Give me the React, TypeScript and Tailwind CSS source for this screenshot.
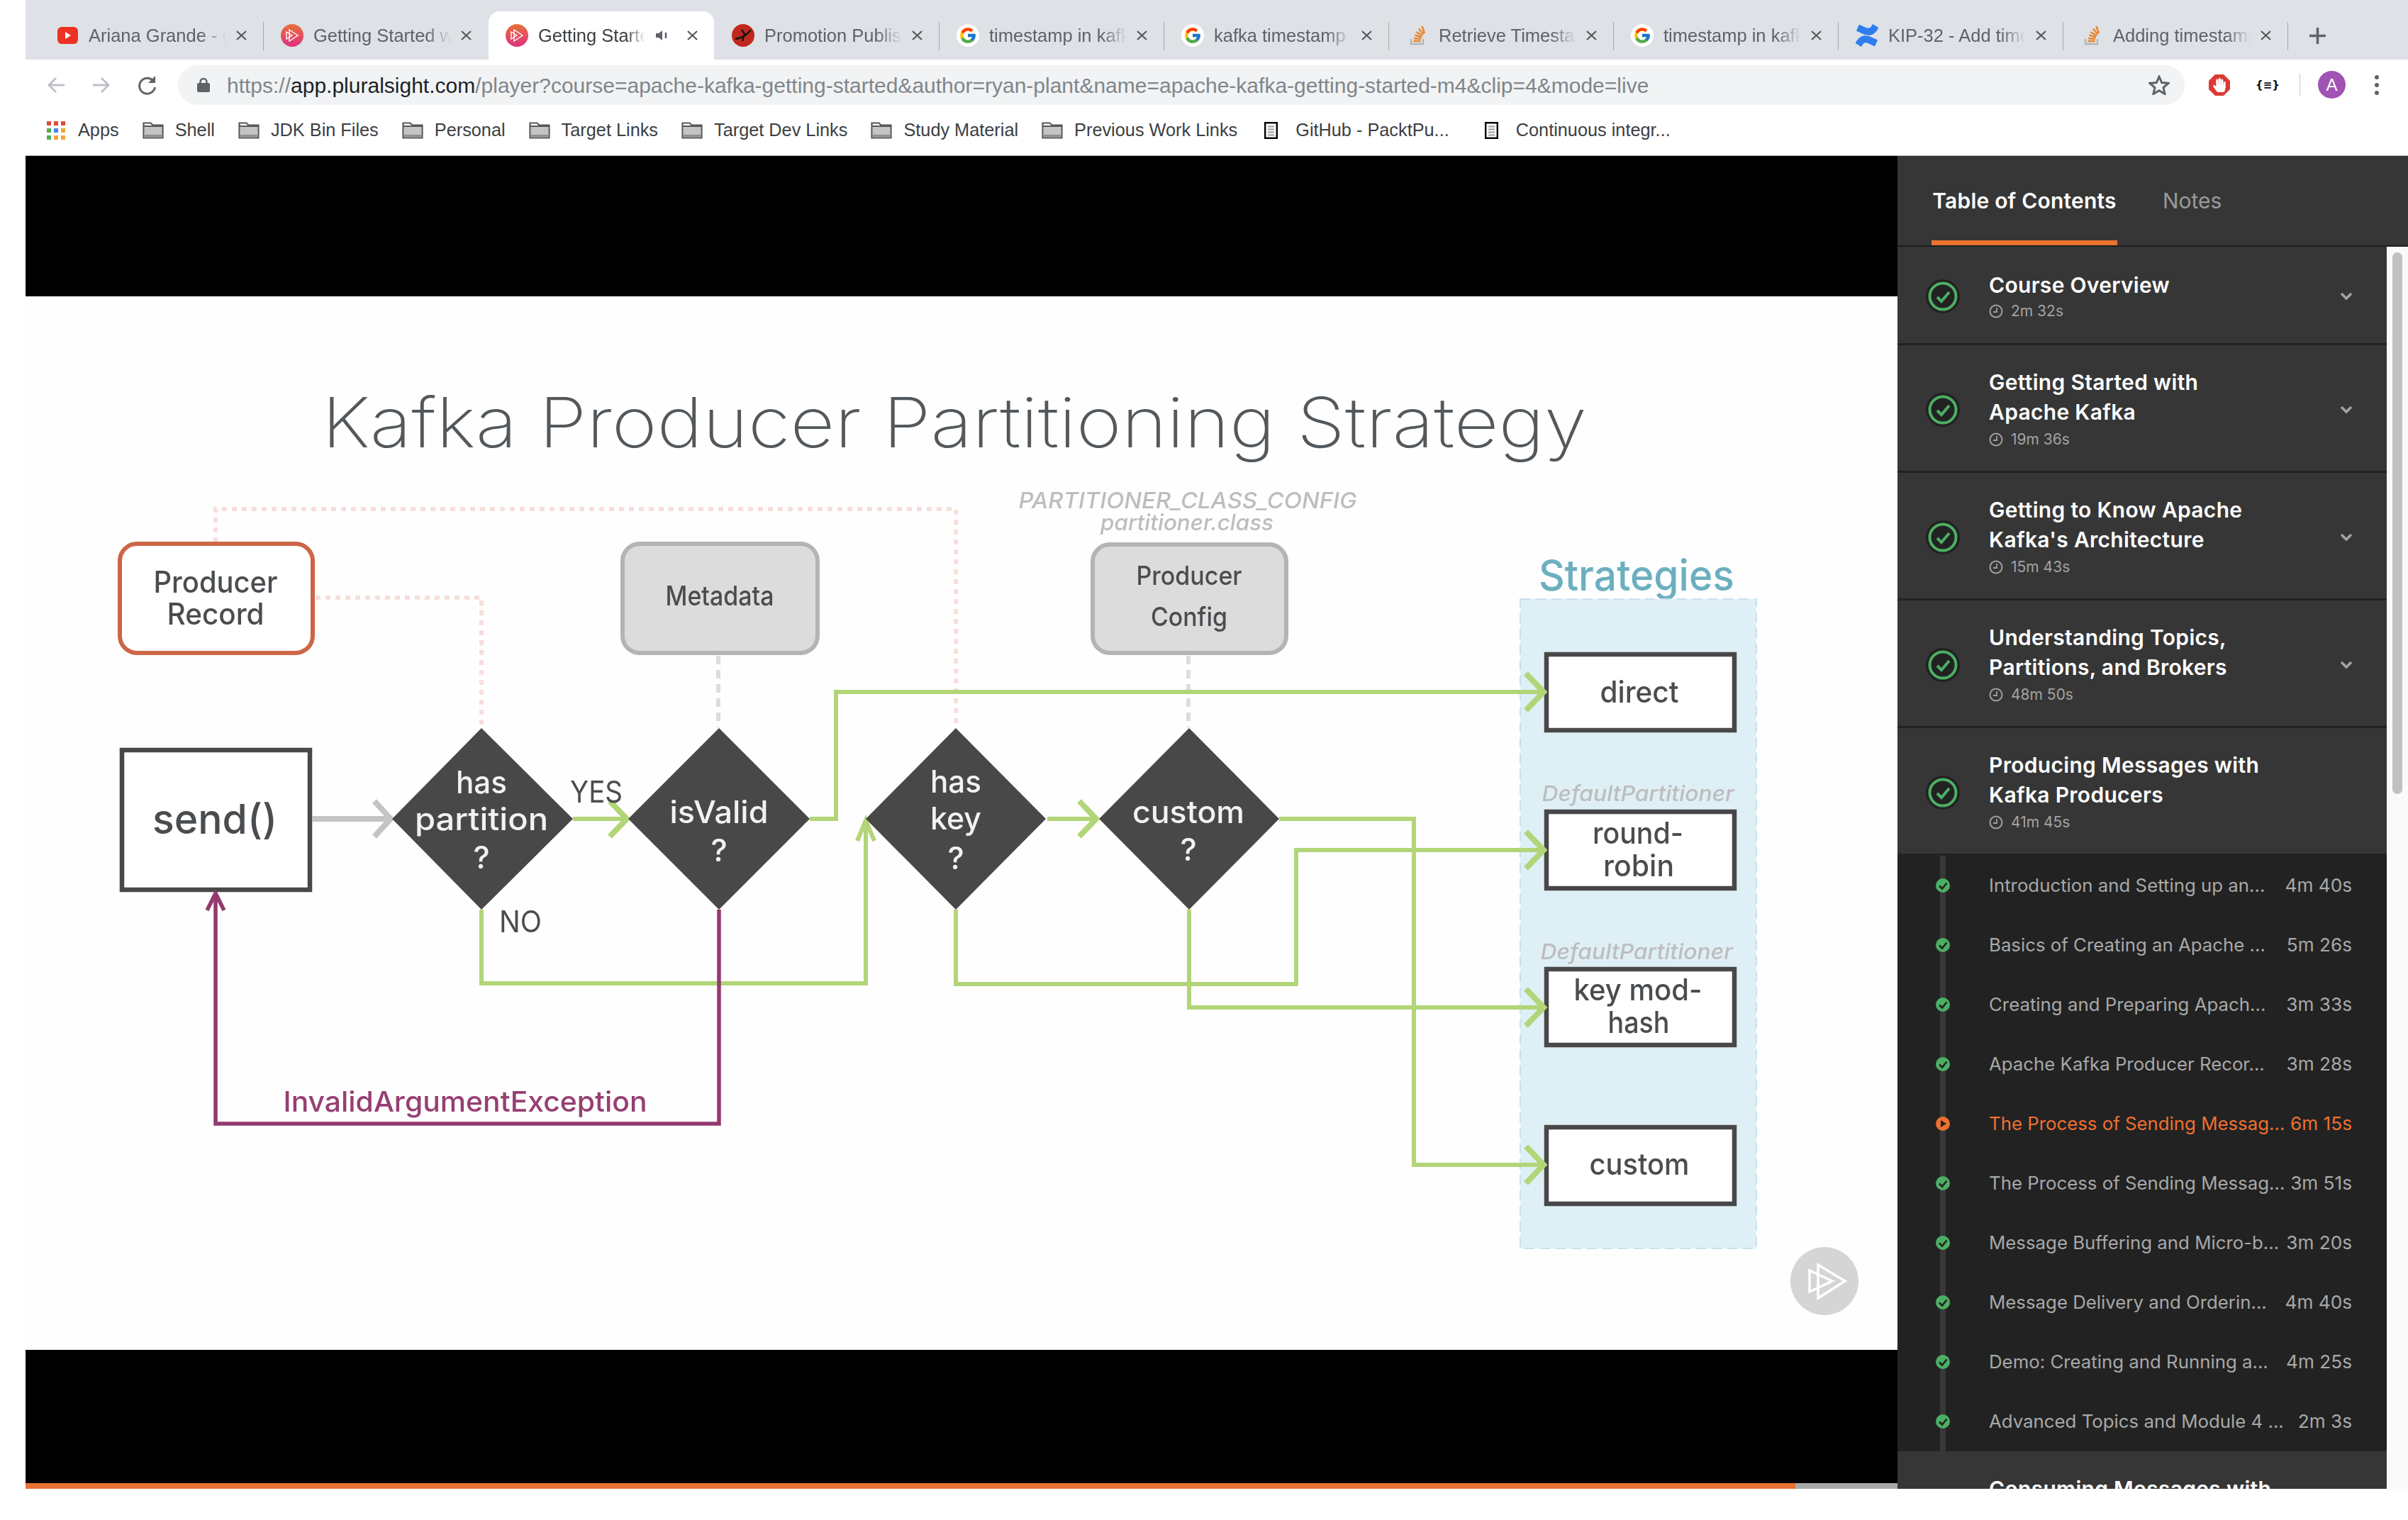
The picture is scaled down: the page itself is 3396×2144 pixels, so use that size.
import React from "react";
import { FcGoogle } from "react-icons/fc";
import { SiConfluence } from "react-icons/si";
import { FaHandPaper } from "react-icons/fa";

const PsIcon = ({ id }: { id: string }) => (
  <svg width="32" height="32" viewBox="0 0 32 32">
    <defs>
      <linearGradient id={id} x1="0" y1="0" x2="0" y2="1">
        <stop offset="0" stopColor="#e8703a" />
        <stop offset="1" stopColor="#e0307f" />
      </linearGradient>
    </defs>
    <circle cx="16" cy="16" r="16" fill={`url(#${id})`} />
    <path d="M12 8l12 8-12 8zM8 11l8 5-8 5z" fill="none" stroke="#fff" strokeWidth="1.4" />
  </svg>
);
const SoIcon = () => (
  <svg width="24" height="28" viewBox="0 0 24 28">
    <path d="M3 19v7h17v-7" fill="none" stroke="#b5b5b5" strokeWidth="2.4" />
    <path d="M6.500 22h10M7 18l10 1M8.500 13.500l9.500 3M10.500 9l8.500 5.500M14 4.500l6.500 8M18.500 1l3.500 10" stroke="#e8872f" strokeWidth="2.6" fill="none" />
  </svg>
);
const GIcon = () => (
  <span className="flex h-[32px] w-[32px] items-center justify-center rounded-full bg-white">
    <FcGoogle size={26} />
  </span>
);

type TabDef = { icon: React.ReactNode; text: string; active?: boolean };
const tabs: TabDef[] = [
  {
    icon: (
      <svg width="29" height="24" viewBox="0 0 29 24">
        <rect width="29" height="24" rx="6" fill="#ee3124" />
        <path d="M11 7l8 5-8 5z" fill="#fff" />
      </svg>
    ),
    text: "Ariana Grande - (Official)",
  },
  { icon: <PsIcon id="ps1" />, text: "Getting Started with Apache" },
  { icon: <PsIcon id="ps2" />, text: "Getting Started with", active: true },
  {
    icon: (
      <svg width="32" height="32" viewBox="0 0 32 32">
        <circle cx="16" cy="16" r="16" fill="#c0281d" />
        <path d="M5 21c7-1 15-4 22-13M14 8l4 6-3 10" fill="none" stroke="#111" strokeWidth="2.4" />
      </svg>
    ),
    text: "Promotion Publish",
  },
  { icon: <GIcon />, text: "timestamp in kafka" },
  { icon: <GIcon />, text: "kafka timestamp" },
  { icon: <SoIcon />, text: "Retrieve Timestamp" },
  { icon: <GIcon />, text: "timestamp in kafka" },
  { icon: <SiConfluence size={32} color="#2f7ef0" />, text: "KIP-32 - Add timestamp" },
  { icon: <SoIcon />, text: "Adding timestamp" },
];

const CloseX = () => (
  <svg width="15" height="14" viewBox="0 0 15 14" className="block shrink-0">
    <path d="M1 1l13 12M14 1L1 13" stroke="#55585c" strokeWidth="2.2" />
  </svg>
);

const Tab = ({ t }: { t: TabDef }) => (
  <div
    className={
      t.active
        ? "flex h-[68px] w-[318px] shrink-0 items-center rounded-t-[16px] bg-white pl-[24px] pr-[23px] text-[#3c4043]"
        : "flex h-[68px] w-[316px] shrink-0 items-center pl-[24px] pr-[23px] text-[#5f6368]"
    }
  >
    <span className="flex w-[32px] shrink-0 justify-center">{t.icon}</span>
    <span className="ml-[14px] w-[150px] flex-1 overflow-hidden whitespace-nowrap text-[25.5px] leading-[32px] [mask-image:linear-gradient(to_right,black_82%,transparent_100%)]">
      {t.text}
    </span>
    {t.active && (
      <svg width="20" height="14" viewBox="0 0 20 14" className="ml-[14px] shrink-0">
        <path d="M1 4h4l5-4v14l-5-4H1z" fill="#5f6368" />
        <path d="M15 3v8" stroke="#5f6368" strokeWidth="2.5" />
      </svg>
    )}
    <span className={t.active ? "ml-[25px]" : "ml-[14px]"}>
      <CloseX />
    </span>
  </div>
);

const Sep = ({ hide }: { hide?: boolean }) => (
  <span className={hide ? "mt-[15px] h-[40px] w-[1px] shrink-0 bg-transparent" : "mt-[15px] h-[40px] w-[1px] shrink-0 bg-[#a5a7aa]"} />
);

const Folder = () => (
  <svg width="30" height="24" viewBox="0 0 30 24" className="shrink-0">
    <path d="M1.500 22.500V1.500h10l3 3h14v18z" fill="#fff" stroke="#55585c" strokeWidth="2.200" />
    <rect x="3" y="7" width="24" height="11" fill="#c4c4c4" />
    <path d="M1.500 6h27" stroke="#55585c" strokeWidth="2" />
    <rect x="3" y="18" width="24" height="3.500" fill="#8f8f8f" />
  </svg>
);
const Doc = () => (
  <svg width="19" height="24" viewBox="0 0 19 24" className="shrink-0">
    <rect x="1.200" y="1.200" width="16.600" height="21.600" fill="#fff" stroke="#000" strokeWidth="2.400" />
    <path d="M5 6.500h9M5 10.500h9M5 14.500h9M5 18.500h9" stroke="#9a9a9a" strokeWidth="2" />
  </svg>
);

const bookmarks: [string, boolean][] = [
  ["Shell", false],
  ["JDK Bin Files", false],
  ["Personal", false],
  ["Target Links", false],
  ["Target Dev Links", false],
  ["Study Material", false],
  ["Previous Work Links", false],
  ["GitHub - PacktPu...", true],
  ["Continuous integr...", true],
];

const AppsIcon = () => (
  <svg width="26" height="26" viewBox="0 0 26 26" className="shrink-0">
    {[
      [0, 0, "#dd4b39"], [10, 0, "#dd4b39"], [20, 0, "#dd4b39"],
      [0, 10, "#4caf50"], [10, 10, "#4285f4"], [20, 10, "#f2a33a"],
      [0, 20, "#4caf50"], [10, 20, "#f2a33a"], [20, 20, "#f2a33a"],
    ].map(([x, y, c], i) => (
      <rect key={i} x={x as number} y={y as number} width="6" height="6" fill={c as string} />
    ))}
  </svg>
);

const sans = "font-['Inter',sans-serif]";

type TP = { x: number; y: number; s: number; w?: number; c?: string; wt?: number; it?: boolean; children: string };
const T = ({ x, y, s, w, c = "#4a4d50", wt = 500, it, children }: TP) => (
  <text
    x={x}
    y={y + 1}
    fontSize={s}
    fill={c}
    fontWeight={wt}
    fontStyle={it ? "italic" : "normal"}
    textAnchor="middle"
    textLength={w}
    lengthAdjust="spacingAndGlyphs"
  >
    {children}
  </text>
);

const Diamond = ({ cx, l, r, t, b }: { cx: number; l: number; r: number; t: number; b: number }) => (
  <polygon points={`${cx},${t} ${r},${(t + b) / 2} ${cx},${b} ${l},${(t + b) / 2}`} fill="#484848" />
);

const Slide = () => {
  const G = "#b2d578";
  return (
    <svg width="2640" height="1486" viewBox="36 418 2640 1486" className={`block bg-[#fefefe] blur-[0.7px] ${sans}`}>
      <T x={1346} y={630} s={98} w={1784} c="#53585c" wt={250}>Kafka Producer Partitioning Strategy</T>

      <g fill="none" stroke="#f6dfdb" strokeWidth="6" strokeDasharray="7 7">
        <path d="M304 765V718H1348V1026" />
        <path d="M445 843H679V1026" />
      </g>
      <g fill="none" stroke="#dddddd" strokeWidth="6" strokeDasharray="12 8">
        <path d="M1013 925V1026" />
        <path d="M1676 925V1026" />
      </g>

      <rect x="169" y="767" width="272" height="154" rx="24" fill="#fff" stroke="#cc6647" strokeWidth="6" />
      <T x={304} y={835} s={42} w={175}>Producer</T>
      <T x={304} y={880} s={42} w={137}>Record</T>
      <rect x="878" y="767" width="275" height="154" rx="24" fill="#dcdcdc" stroke="#b4b4b4" strokeWidth="6" />
      <T x={1015} y={853} s={38} w={153}>Metadata</T>
      <rect x="1541" y="768" width="273" height="153" rx="24" fill="#dcdcdc" stroke="#b4b4b4" strokeWidth="6" />
      <T x={1677} y={824} s={37} w={149}>Producer</T>
      <T x={1677} y={882} s={37} w={108}>Config</T>
      <T x={1675} y={716} s={31} w={477} c="#bdbdbd" it>PARTITIONER_CLASS_CONFIG</T>
      <T x={1674} y={747} s={31} w={244} c="#bdbdbd" it>partitioner.class</T>

      <T x={2308} y={832} s={60} w={276} c="#6cafbf">Strategies</T>
      <rect x="2144" y="845" width="333" height="916" fill="#deeff5" stroke="#c8e2ea" strokeWidth="2" strokeDasharray="14 8" />
      {[
        [920, 1033],
        [1142, 1256],
        [1364, 1477],
        [1587, 1701],
      ].map(([a, b]) => (
        <rect key={a} x="2181" y={a + 3} width="265" height={b - a - 6} fill="#fff" stroke="#484848" strokeWidth="6.5" />
      ))}
      <T x={2312} y={990} s={42} w={111}>direct</T>
      <T x={2310} y={1129} s={30} w={271} c="#bdbdbd" it>DefaultPartitioner</T>
      <T x={2310} y={1189} s={42} w={128}>round-</T>
      <T x={2311} y={1235} s={42} w={100}>robin</T>
      <T x={2308} y={1352} s={30} w={271} c="#bdbdbd" it>DefaultPartitioner</T>
      <T x={2310} y={1410} s={42} w={181}>key mod-</T>
      <T x={2311} y={1456} s={42} w={87}>hash</T>
      <T x={2312} y={1656} s={42} w={141}>custom</T>

      <rect x="172" y="1058" width="265" height="197" fill="#fff" stroke="#484848" strokeWidth="6.5" />
      <T x={303} y={1175} s={58} w={176}>send()</T>

      <g fill="none" stroke="#c4c4c4" strokeWidth="8">
        <path d="M440 1155H546" />
        <path d="M528 1130L551 1155L528 1180" />
      </g>
      <g fill="none" stroke={G}>
        <path d="M808 1155H880M1142 1155H1179V976H2172M1477 1155H1542M1804 1155H1994V1643H2172M1348 1283V1388H1828V1199H2172M1677 1283V1421H2172M679 1283V1387H1221V1160" strokeWidth="6" />
        <path d="M860 1130L884 1155L860 1180M1522 1130L1546 1155L1522 1180M2152 950L2177 976L2152 1002M2152 1173L2177 1199L2152 1225M2152 1395L2177 1421L2152 1447M2152 1617L2177 1643L2152 1669" strokeWidth="8" />
        <path d="M1209 1186L1221 1157L1233 1186" strokeWidth="6" />
      </g>
      <g fill="none" stroke="#93396e">
        <path d="M1014 1283V1585H304V1262" strokeWidth="5.5" />
        <path d="M292 1284L304 1260L316 1284" strokeWidth="5.5" />
      </g>

      <Diamond cx={679} l={553} r={808} t={1027} b={1283} />
      <Diamond cx={1014} l={886} r={1142} t={1027} b={1283} />
      <Diamond cx={1348} l={1221} r={1475} t={1027} b={1283} />
      <Diamond cx={1677} l={1550} r={1804} t={1027} b={1283} />

      <T x={679} y={1118} s={44} w={72} c="#f2f2f2" wt={550}>has</T>
      <T x={679} y={1170} s={44} w={188} c="#f2f2f2" wt={550}>partition</T>
      <T x={679} y={1224} s={44} c="#f2f2f2" wt={550}>?</T>
      <T x={1014} y={1160} s={44} w={139} c="#f2f2f2" wt={550}>isValid</T>
      <T x={1014} y={1214} s={44} c="#f2f2f2" wt={550}>?</T>
      <T x={1348} y={1117} s={44} w={72} c="#f2f2f2" wt={550}>has</T>
      <T x={1348} y={1169} s={44} w={72} c="#f2f2f2" wt={550}>key</T>
      <T x={1348} y={1225} s={44} c="#f2f2f2" wt={550}>?</T>
      <T x={1676} y={1160} s={44} w={158} c="#f2f2f2" wt={550}>custom</T>
      <T x={1676} y={1213} s={44} c="#f2f2f2" wt={550}>?</T>

      <T x={841} y={1131} s={42} w={74} wt={400}>YES</T>
      <T x={734} y={1314} s={42} w={60} wt={400}>NO</T>
      <T x={656} y={1567} s={40} w={513} c="#963f73">InvalidArgumentException</T>

      <circle cx="2573" cy="1807" r="48" fill="#d5d5d5" />
      <path d="M2564 1784L2602 1807L2564 1831ZM2552 1792L2584 1807L2552 1822Z" fill="none" stroke="#fff" strokeWidth="3.5" />
    </svg>
  );
};

const Clock = () => (
  <svg width="20" height="20" viewBox="0 0 20 20" className="shrink-0">
    <circle cx="10" cy="10" r="8.5" fill="none" stroke="#a0a0a0" strokeWidth="2" />
    <path d="M11 5v6H6" fill="none" stroke="#a0a0a0" strokeWidth="1.8" />
  </svg>
);
const RingCheck = () => (
  <svg width="50" height="50" viewBox="0 0 50 50" className="shrink-0">
    <circle cx="25" cy="25" r="24" fill="#222" />
    <circle cx="25" cy="25" r="18.500" fill="none" stroke="#4caf64" strokeWidth="4" />
    <path d="M17 26l6 6 11-13" fill="none" stroke="#4caf64" strokeWidth="4" />
  </svg>
);
const Chevron = () => (
  <svg width="18" height="12" viewBox="0 0 18 12" className="mr-[48px] shrink-0">
    <path d="M2 2l7 7 7-7" fill="none" stroke="#a3a3a3" strokeWidth="3.600" />
  </svg>
);

const Section = ({ lines, time, chevron = true, tall }: { lines: string[]; time: string; chevron?: boolean; tall?: boolean }) => (
  <div className={tall ? "flex h-[180px] shrink-0 items-center border-b-[3px] border-[#222] bg-[#363636] pt-[4px]" : "flex h-[139px] shrink-0 items-center border-b-[3px] border-[#222] bg-[#363636] pt-[4px]"}>
    <span className="ml-[39px] mr-[40px] flex shrink-0">
      <RingCheck />
    </span>
    <div className="flex-1">
      <div className={tall ? "-mt-[2px] mb-[2px]" : ""}>
        {lines.map((l) => (
          <div key={l} className="text-[30px] font-semibold leading-[42px] tracking-[0.3px] text-white">
            {l}
          </div>
        ))}
      </div>
      <div className="flex h-[32px] items-center text-[21px] text-[#a3a3a3]">
        <Clock />
        <span className="ml-[11px]">{time}</span>
      </div>
    </div>
    {chevron && <Chevron />}
  </div>
);

const lessons: [string, string, "done" | "now"][] = [
  ["Introduction and Setting up an...", "4m 40s", "done"],
  ["Basics of Creating an Apache ...", "5m 26s", "done"],
  ["Creating and Preparing Apach...", "3m 33s", "done"],
  ["Apache Kafka Producer Recor...", "3m 28s", "done"],
  ["The Process of Sending Messag...", "6m 15s", "now"],
  ["The Process of Sending Messag...", "3m 51s", "done"],
  ["Message Buffering and Micro-b...", "3m 20s", "done"],
  ["Message Delivery and Orderin...", "4m 40s", "done"],
  ["Demo: Creating and Running a...", "4m 25s", "done"],
  ["Advanced Topics and Module 4 ...", "2m 3s", "done"],
];

const Dot = ({ now }: { now: boolean }) =>
  now ? (
    <svg width="22" height="22" viewBox="0 0 22 22" className="shrink-0">
      <circle cx="11" cy="11" r="10" fill="#ee7030" />
      <path d="M8 6l8 5-8 5z" fill="#222" />
    </svg>
  ) : (
    <svg width="22" height="22" viewBox="0 0 22 22" className="shrink-0">
      <circle cx="11" cy="11" r="10" fill="#4caf64" />
      <path d="M6 11.500l4 4 6.500-8" fill="none" stroke="#222" strokeWidth="2.600" />
    </svg>
  );

const Sidebar = () => (
  <aside className={`flex w-[720px] shrink-0 flex-col overflow-hidden ${sans}`}>
    <div className="flex h-[128px] shrink-0 items-start border-b-[2px] border-[#1d1d1d] bg-[#363636] pl-[48px]">
      <div className="flex h-[126px] w-[262px] items-center justify-center whitespace-nowrap border-b-[7px] border-[#e9722f] pt-[7px] text-[30px] font-semibold tracking-[0.2px] text-white">
        Table of Contents
      </div>
      <div className="ml-[64px] flex h-[126px] items-center text-[30px] text-[#9a9a9a]">Notes</div>
    </div>
    <div className="flex min-h-0 flex-1">
      <div className="flex w-[690px] shrink-0 flex-col overflow-hidden bg-[#222]">
        <Section lines={["Course Overview"]} time="2m 32s" />
        <Section tall lines={["Getting Started with", "Apache Kafka"]} time="19m 36s" />
        <Section tall lines={["Getting to Know Apache", "Kafka's Architecture"]} time="15m 43s" />
        <Section tall lines={["Understanding Topics,", "Partitions, and Brokers"]} time="48m 50s" />
        <Section tall chevron={false} lines={["Producing Messages with", "Kafka Producers"]} time="41m 45s" />
        <div className="relative shrink-0">
          <div className="absolute bottom-0 left-[60px] top-0 w-[8px] bg-[#383838]" />
          {lessons.map(([t, d, s], i) => (
            <div key={i} className="relative flex h-[84px] items-center pl-[53px] pr-[49px]">
              <Dot now={s === "now"} />
              <span className={s === "now" ? "ml-[54px] w-0 min-w-0 flex-1 whitespace-nowrap text-[25.8px] text-[#ef7030]" : "ml-[54px] w-0 min-w-0 flex-1 whitespace-nowrap text-[25.8px] text-[#a8a8a8]"}>{t}</span>
              <span className={s === "now" ? "shrink-0 whitespace-nowrap text-[26.2px] text-[#ef7030]" : "shrink-0 whitespace-nowrap text-[26.2px] text-[#a8a8a8]"}>{d}</span>
            </div>
          ))}
        </div>
        <div className="shrink-0 bg-[#363636] pl-[129px] pt-[32px]">
          <div className="text-[30px] font-semibold leading-[42px] tracking-[0.3px] text-white">Consuming Messages with</div>
        </div>
      </div>
      <div className="flex-1 bg-[#fafafa] px-[8px] pt-[8px]">
        <div className="h-[764px] rounded-full bg-[#c1c1c1]" />
      </div>
    </div>
  </aside>
);

export default function App() {
  return (
    <div className="h-[2144px] w-[3396px] overflow-hidden bg-white pl-[36px] font-['Liberation_Sans',sans-serif]">
      {/* tab strip */}
      <div className="flex h-[84px] items-start bg-[#dee1e6] pl-[18px] pt-[16px]">
        {tabs.map((t, i) => (
          <React.Fragment key={i}>
            <Sep hide={i === 0 || i === 2 || i === 3} />
            <Tab t={t} />
          </React.Fragment>
        ))}
        <Sep />
        <svg width="23" height="23" viewBox="0 0 23 23" className="ml-[30px] mt-[23px] shrink-0">
          <path d="M11.500 0v23M0 11.500h23" stroke="#5f6368" strokeWidth="3.500" />
        </svg>
      </div>

      {/* toolbar */}
      <div className="flex h-[68px] items-start pl-[30px] pt-[8px]">
        <svg width="26" height="24" viewBox="0 0 26 24" className="mt-[16px] shrink-0">
          <path d="M25 12H3M13 2L3 12l10 10" fill="none" stroke="#bdc1c6" strokeWidth="2.800" />
        </svg>
        <svg width="26" height="24" viewBox="0 0 26 24" className="ml-[38px] mt-[16px] shrink-0">
          <path d="M1 12h22M13 2l10 10-10 10" fill="none" stroke="#bdc1c6" strokeWidth="2.800" />
        </svg>
        <svg width="28" height="28" viewBox="0 0 28 28" className="ml-[37px] mt-[14px] shrink-0">
          <path d="M23 8a11 11 0 1 0 2.500 9" fill="none" stroke="#5f6368" strokeWidth="3" />
          <path d="M26 1v10H16z" fill="#5f6368" />
        </svg>
        <div className="ml-[30px] flex h-[56px] w-[2830px] items-center rounded-full bg-[#f1f3f4] pl-[27px] pr-[21px]">
          <svg width="18" height="20" viewBox="0 0 18 20" className="shrink-0">
            <rect y="7" width="18" height="13" rx="2" fill="#5f6368" />
            <path d="M4.500 8V5.500a4.500 4.500 0 0 1 9 0V8" fill="none" stroke="#5f6368" strokeWidth="2.400" />
          </svg>
          <div className="ml-[24px] flex-1 whitespace-nowrap text-[30px] text-[#80868b]">
            https://<span className="text-[#202124]">app.pluralsight.com</span>/player?course=apache-kafka-getting-started&amp;author=ryan-plant&amp;name=apache-kafka-getting-started-m4&amp;clip=4&amp;mode=live
          </div>
          <svg width="30" height="28" viewBox="0 0 30 28" className="shrink-0">
            <path d="M15 2l3.700 8.600 9.300.8-7 6.100 2.100 9.100-8.100-4.800-8.100 4.800 2.100-9.100-7-6.100 9.300-.8z" fill="none" stroke="#5f6368" strokeWidth="3" />
          </svg>
        </div>
        <span className="ml-[34px] mt-[13px] flex h-[30px] w-[30px] shrink-0 items-center justify-center bg-[#dc3a33] [clip-path:polygon(30%_0,70%_0,100%_30%,100%_70%,70%_100%,30%_100%,0_70%,0_30%)]">
          <FaHandPaper size={20} color="#fff" />
        </span>
        <span className="ml-[36px] mt-[14px] w-[25px] shrink-0 whitespace-nowrap text-center font-['DejaVu_Sans',sans-serif] text-[15px] font-bold leading-[28px] text-[#111]">{"{≡}"}</span>
        <span className="ml-[37px] mt-[12px] h-[32px] w-[1px] shrink-0 bg-[#c8c8c8]" />
        <span className="ml-[25px] mt-[8px] flex h-[39px] w-[39px] shrink-0 items-center justify-center rounded-full bg-[#a152b5] text-[24px] text-white">A</span>
        <span className="ml-[41px] mt-[14px] flex h-[28px] shrink-0 flex-col justify-between">
          <span className="h-[6px] w-[6px] rounded-full bg-[#5f6368]" />
          <span className="h-[6px] w-[6px] rounded-full bg-[#5f6368]" />
          <span className="h-[6px] w-[6px] rounded-full bg-[#5f6368]" />
        </span>
      </div>

      {/* bookmarks */}
      <div className="flex h-[68px] items-center gap-[33px] border-b-[1px] border-[#b9b9b9] pb-[4px] pl-[30px] text-[25.3px] text-[#3c4043]">
        <div className="flex items-center gap-[18px]">
          <AppsIcon />
          <span>Apps</span>
        </div>
        {bookmarks.map(([b, doc]) => (
          <div key={b} className={doc ? "ml-[5px] mr-[12px] flex items-center gap-[25px]" : "flex items-center gap-[16px]"}>
            {doc ? <Doc /> : <Folder />}
            <span className="whitespace-nowrap">{b}</span>
          </div>
        ))}
      </div>

      {/* player */}
      <div className="flex h-[1880px] overflow-hidden">
        <div className="flex w-[2640px] shrink-0 flex-col bg-black">
          <div className="h-[198px] shrink-0" />
          <Slide />
          <div className="flex-1" />
          <div className="flex h-[8px] shrink-0 bg-[#a8a8a8]">
            <div className="h-full w-[2496px] bg-[#ea7033]" />
          </div>
        </div>
        <Sidebar />
      </div>
    </div>
  );
}
